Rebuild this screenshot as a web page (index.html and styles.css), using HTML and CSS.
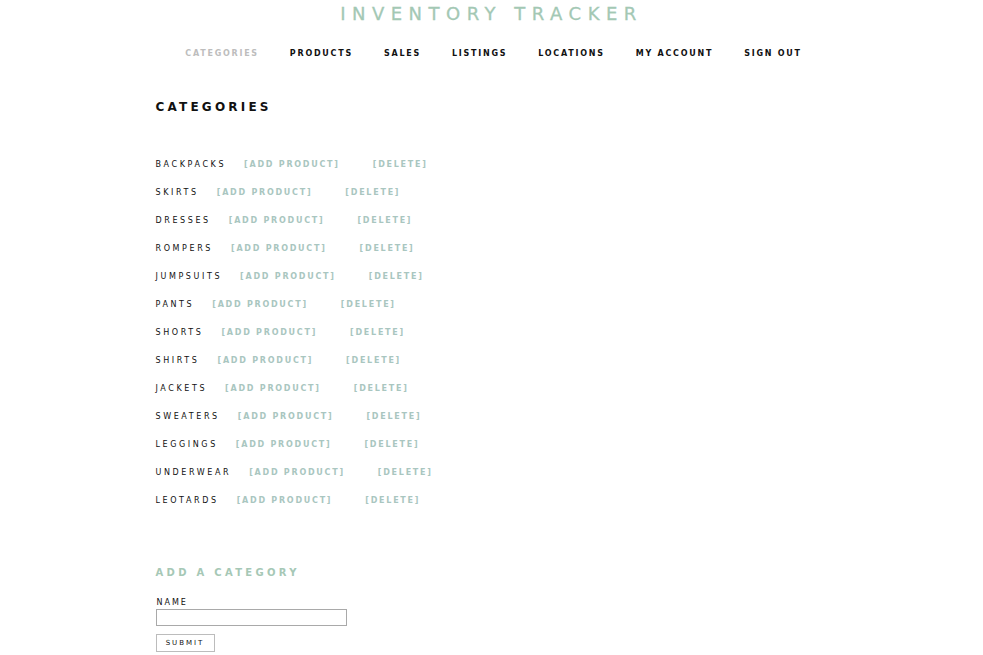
FILE: index.html
```
<!DOCTYPE html>
<html>
<head>
<meta charset="utf-8">
<link rel="stylesheet" href="styles.css">
</head>
<body>
<header class="header">
  <h1 class="title">Inventory Tracker</h1>
  <nav class="nav">
    <a class="nav-link current">Categories</a>
    <a class="nav-link">Products</a>
    <a class="nav-link">Sales</a>
    <a class="nav-link">Listings</a>
    <a class="nav-link">Locations</a>
    <a class="nav-link">My Account</a>
    <a class="nav-link">Sign Out</a>
  </nav>
</header>
<main class="main">
  <h2 class="heading">Categories</h2>
  <ul class="list">
    <li class="row"><span class="name">Backpacks</span><a class="add">[Add Product]</a><a class="del">[Delete]</a></li>
    <li class="row"><span class="name">Skirts</span><a class="add">[Add Product]</a><a class="del">[Delete]</a></li>
    <li class="row"><span class="name">Dresses</span><a class="add">[Add Product]</a><a class="del">[Delete]</a></li>
    <li class="row"><span class="name">Rompers</span><a class="add">[Add Product]</a><a class="del">[Delete]</a></li>
    <li class="row"><span class="name">Jumpsuits</span><a class="add">[Add Product]</a><a class="del">[Delete]</a></li>
    <li class="row"><span class="name">Pants</span><a class="add">[Add Product]</a><a class="del">[Delete]</a></li>
    <li class="row"><span class="name">Shorts</span><a class="add">[Add Product]</a><a class="del">[Delete]</a></li>
    <li class="row"><span class="name">Shirts</span><a class="add">[Add Product]</a><a class="del">[Delete]</a></li>
    <li class="row"><span class="name">Jackets</span><a class="add">[Add Product]</a><a class="del">[Delete]</a></li>
    <li class="row"><span class="name">Sweaters</span><a class="add">[Add Product]</a><a class="del">[Delete]</a></li>
    <li class="row"><span class="name">Leggings</span><a class="add">[Add Product]</a><a class="del">[Delete]</a></li>
    <li class="row"><span class="name">Underwear</span><a class="add">[Add Product]</a><a class="del">[Delete]</a></li>
    <li class="row"><span class="name">Leotards</span><a class="add">[Add Product]</a><a class="del">[Delete]</a></li>
  </ul>
  <h3 class="subheading">Add a Category</h3>
  <form class="form">
    <label class="label">Name</label>
    <input class="input" type="text">
    <button class="submit" type="button">Submit</button>
  </form>
</main>
</body>
</html>
```
FILE: styles.css
```
* { box-sizing: border-box; }
html, body { margin: 0; padding: 0; background: #fff; }
body {
  font-family: "DejaVu Sans", "Liberation Sans", sans-serif;
  text-transform: uppercase;
  color: #111;
}
.header {
  display: flex;
  flex-direction: column;
  align-items: center;
}
.title {
  margin: 4px 0 0 0;
  font-size: 18px;
  line-height: 20px;
  font-weight: normal;
  letter-spacing: 6.5px;
  color: #a3c8b4;
  -webkit-text-stroke: 0.3px #a3c8b4;
}
.nav {
  display: flex;
  gap: 31px;
  margin-top: 25px;
  margin-left: 4px;
}
.nav-link {
  font-size: 8px;
  line-height: 10px;
  font-weight: bold;
  letter-spacing: 1.75px;
  color: #111;
}
.nav-link.current { color: #bdbdbd; }
.main {
  width: 672px;
  margin: 0 auto;
  display: flex;
  flex-direction: column;
  align-items: flex-start;
}
.heading {
  margin: 41px 0 0 0;
  font-size: 12px;
  line-height: 14px;
  font-weight: bold;
  letter-spacing: 3.2px;
}
.list {
  list-style: none;
  margin: 36px 0 0 0;
  padding: 0;
}
.row {
  display: flex;
  height: 28px;
  align-items: center;
  font-size: 8px;
  letter-spacing: 1.75px;
}
.name { color: #111; letter-spacing: 2.6px; }
.add { margin-left: 18px; color: #a9c6c0; font-weight: bold; }
.del { margin-left: 33px; color: #a9c6c0; font-weight: bold; }
.subheading {
  margin: 53px 0 0 0;
  font-size: 10px;
  line-height: 12px;
  font-weight: bold;
  letter-spacing: 3.3px;
  color: #a6c8b6;
}
.form {
  display: flex;
  flex-direction: column;
  align-items: flex-start;
  margin-top: 19px;
}
.label {
  font-size: 8px;
  line-height: 10px;
  letter-spacing: 2px;
  margin-left: 1px;
}
.input {
  width: 191px;
  height: 17px;
  margin: 1px 0 0 0;
  border: 1px solid #a9a9a9;
  padding: 0;
}
.submit {
  margin-top: 8px;
  width: 59px;
  height: 18px;
  background: #fff;
  border: 1px solid #bcbcbc;
  font-family: inherit;
  text-transform: uppercase;
  font-size: 7px;
  letter-spacing: 2px;
  padding: 0;
  color: #111;
}
```
